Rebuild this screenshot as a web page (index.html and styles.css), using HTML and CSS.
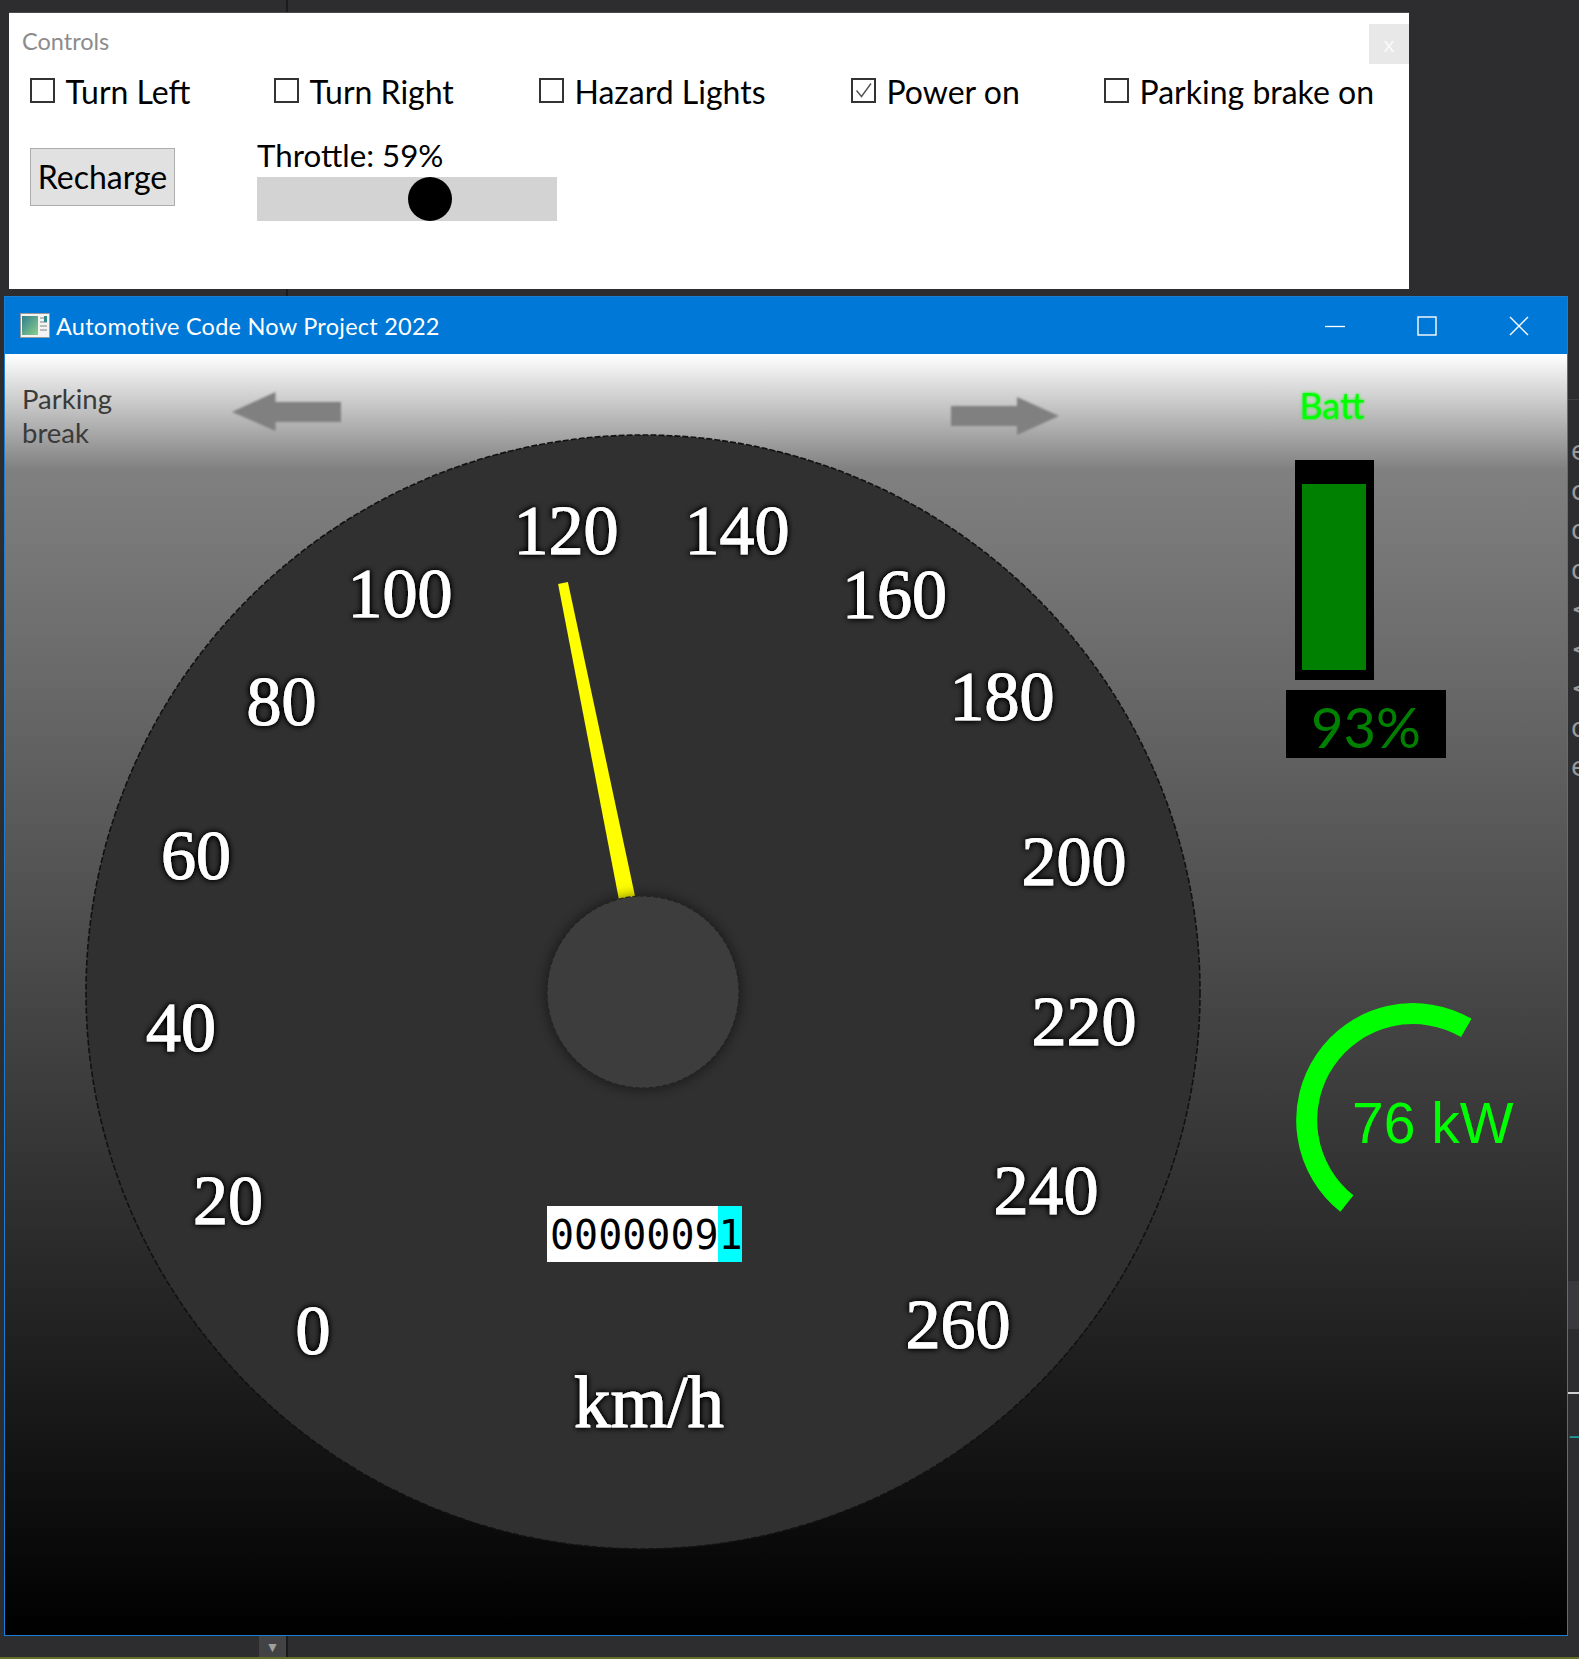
FILE: index.html
```html
<!DOCTYPE html>
<html>
<head>
<meta charset="utf-8">
<link rel="stylesheet" href="styles.css">
</head>
<body>
<div class="screen">
  <div class="controls">
    <div class="ctl-head">
      <span class="ctl-title">Controls</span>
      <span class="ctl-close">x</span>
    </div>
    <div class="checks">
      <div class="chk"><span class="box"></span><span class="lbl">Turn Left</span></div>
      <div class="chk"><span class="box"></span><span class="lbl">Turn Right</span></div>
      <div class="chk"><span class="box"></span><span class="lbl">Hazard Lights</span></div>
      <div class="chk"><span class="box"><svg class="tick" viewBox="0 0 21 21" width="21" height="21"><polyline points="3.5,10.5 8.5,16.5 18,3.5" fill="none" stroke="#555" stroke-width="1.4"/></svg></span><span class="lbl">Power on</span></div>
      <div class="chk"><span class="box"></span><span class="lbl">Parking brake on</span></div>
    </div>
    <div class="row2">
      <div class="recharge">Recharge</div>
      <div class="throttle">
        <div class="thr-label">Throttle: 59%</div>
        <div class="track"><span class="knob" style="margin-left:151px"></span></div>
      </div>
    </div>
  </div>

  <div class="lower">
    <div class="window">
      <div class="titlebar">
        <svg class="appicon" width="30" height="25" viewBox="0 0 30 25">
          <defs>
            <linearGradient id="ig" x1="0" y1="0" x2="1" y2="1">
              <stop offset="0" stop-color="#2f7f8f"/>
              <stop offset="1" stop-color="#8ccf8a"/>
            </linearGradient>
          </defs>
          <rect x="0.5" y="0.5" width="29" height="24" fill="#f4f4f4" stroke="#9a9a9a"/>
          <rect x="2" y="3" width="16" height="19" fill="url(#ig)"/>
          <rect x="20" y="4" width="7" height="2" fill="#bbb"/>
          <rect x="20" y="8" width="7" height="2" fill="#bbb"/>
          <rect x="20" y="12" width="7" height="2" fill="#bbb"/>
          <rect x="20" y="16" width="7" height="2" fill="#bbb"/>
          <rect x="24" y="3" width="3" height="6" fill="#2c8c8c"/>
        </svg>
        <span class="title">Automotive Code Now Project 2022</span>
        <div class="wbtns">
          <span class="wbtn"><svg width="20" height="20" viewBox="0 0 20 20"><line x1="0" y1="10.5" x2="20" y2="10.5" stroke="#fff" stroke-width="1.3"/></svg></span>
          <span class="wbtn"><svg width="20" height="20" viewBox="0 0 20 20"><rect x="1" y="1" width="18" height="18" fill="none" stroke="#fff" stroke-width="1.4"/></svg></span>
          <span class="wbtn"><svg width="20" height="20" viewBox="0 0 20 20"><path d="M1 1 L19 19 M19 1 L1 19" stroke="#fff" stroke-width="1.4"/></svg></span>
        </div>
      </div>
      <div class="client">
        <svg class="canvas" width="1562" height="1281" viewBox="5 354 1562 1281">
          <defs>
            <filter id="numglow" x="-30%" y="-30%" width="160%" height="160%">
              <feGaussianBlur in="SourceAlpha" stdDeviation="3"/>
              <feComponentTransfer><feFuncA type="linear" slope="1.8"/></feComponentTransfer>
              <feMerge><feMergeNode/><feMergeNode in="SourceGraphic"/></feMerge>
            </filter>
            <filter id="hubshadow" x="-30%" y="-30%" width="160%" height="160%">
              <feDropShadow dx="0" dy="0" stdDeviation="7" flood-color="#000" flood-opacity="0.55"/>
            </filter>
            <filter id="soft" x="-10%" y="-20%" width="120%" height="140%">
              <feGaussianBlur stdDeviation="0.9"/>
            </filter>
            <filter id="gglow" x="-20%" y="-30%" width="140%" height="160%">
              <feGaussianBlur in="SourceGraphic" stdDeviation="1.6" result="b"/>
              <feMerge><feMergeNode in="b"/><feMergeNode in="SourceGraphic"/></feMerge>
            </filter>
          </defs>

          <text class="pb" x="22" y="409">Parking</text>
          <text class="pb" x="22" y="443">break</text>

          <polygon class="arrow" filter="url(#soft)" points="232,412 275.5,392 275.5,402 341,402 341,422 275.5,422 275.5,431"/>
          <polygon class="arrow" filter="url(#soft)" points="1059,416 1017,397 1017,406 951,406 951,426 1017,426 1017,435"/>

          <text class="batt" filter="url(#gglow)" x="1332" y="419" text-anchor="middle">Batt</text>
          <rect x="1295" y="460" width="79" height="220" fill="#000"/>
          <rect x="1302" y="484" width="64" height="186" fill="#008000"/>
          <rect x="1286" y="690" width="160" height="68" fill="#000"/>
          <text class="pct" x="1366" y="748" text-anchor="middle">93%</text>

          <circle cx="643" cy="992" r="557" fill="#303030" stroke="#111" stroke-width="1.6" stroke-dasharray="6 2"/>

          <g class="nums" filter="url(#numglow)">
            <text x="313" y="1354">0</text>
            <text x="228" y="1223.5">20</text>
            <text x="181" y="1051">40</text>
            <text x="196" y="878.5">60</text>
            <text x="281.5" y="725">80</text>
            <text x="400" y="617">100</text>
            <text x="566" y="553.5">120</text>
            <text x="737" y="553.5">140</text>
            <text x="894.5" y="617.5">160</text>
            <text x="1002" y="720">180</text>
            <text x="1074" y="885">200</text>
            <text x="1084" y="1044.5">220</text>
            <text x="1046" y="1214">240</text>
            <text x="958" y="1347.5">260</text>
            <text class="unit" x="649" y="1427">km/h</text>
          </g>

          <polygon class="needle" points="567.9,582 558.1,584 623.7,924.2 640.3,920.8"/>
          <circle cx="643" cy="992" r="96" fill="#3d3d3d" stroke="#222" stroke-width="1.2" stroke-dasharray="5 2" filter="url(#hubshadow)"/>

          <rect x="547" y="1206" width="172" height="56" fill="#fff"/>
          <rect x="718" y="1206" width="24" height="56" fill="#00ffff"/>
          <text class="odo" x="550" y="1249">00000091</text>

          <path d="M 1346.9 1203.5 A 106.5 106.5 0 0 1 1466.25 1027.8" fill="none" stroke="#00ff00" stroke-width="21"/>
          <text class="kw" x="1352" y="1143">76 kW</text>
        </svg>
      </div>
    </div>
    <div class="side">
      <div class="side-rule"></div>
      <div class="code">ee
ce
oo
o
&lt;
&lt;
&lt;
oo
e</div>
      <div class="side-band"></div>
      <div class="side-line"></div>
      <div class="side-teal">_(</div>
    </div>
  </div>

  <div class="taskbar">
    <span class="scrollbtn">&#9660;</span>
  </div>
</div>
</body>
</html>
```

FILE: styles.css
```css
html, body {
  margin: 0;
  padding: 0;
}
body {
  background: #2d2d30;
  font-family: Lato, "Open Sans", sans-serif;
}
.screen {
  width: 1579px;
  height: 1659px;
  overflow: hidden;
  display: flex;
  flex-direction: column;
  background:
    linear-gradient(to right, transparent 286px, #1b1b1c 286px, #1b1b1c 288px, transparent 288px),
    #2d2d30;
}

/* ---------- Controls panel ---------- */
.controls {
  margin: 13px 0 0 9px;
  width: 1400px;
  height: 276px;
  flex: none;
  box-sizing: border-box;
  padding-left: 21px;
  background: #fff;
  box-shadow: 0 -1px 0 #4a4a4e;
  color: #000;
}
.ctl-head {
  display: flex;
  justify-content: space-between;
  align-items: flex-start;
  height: 51px;
  margin-left: -8px;
}
.ctl-title {
  margin-top: 12.5px;
  font-size: 23.5px;
  line-height: 30px;
  color: #8c8c8c;
}
.ctl-close {
  margin-top: 11px;
  width: 40px;
  height: 40px;
  background: #e8e8e8;
  color: #fafafa;
  font-size: 22px;
  line-height: 40px;
  text-align: center;
}
.checks {
  display: grid;
  grid-template-columns: 244px 265px 312px 253px auto;
  align-items: center;
  margin-top: 7px;
  height: 38px;
  font-size: 32px;
}
.chk {
  display: flex;
  align-items: center;
  gap: 10.5px;
  line-height: 38px;
}
.lbl {
  position: relative;
  top: 1.5px;
}
.box {
  width: 25px;
  height: 25px;
  box-sizing: border-box;
  border: 2px solid #333;
  flex: none;
  display: flex;
}
.tick {
  display: block;
}
.row2 {
  display: flex;
  align-items: flex-start;
  margin-top: 26.5px;
}
.recharge {
  margin-top: 12.5px;
  width: 145px;
  height: 58px;
  box-sizing: border-box;
  background: #e1e1e1;
  border: 1px solid #adadad;
  font-size: 32px;
  line-height: 56px;
  text-align: center;
}
.throttle {
  margin-left: 82px;
}
.thr-label {
  font-size: 31.3px;
  line-height: 38px;
}
.track {
  margin-top: 3.5px;
  width: 300px;
  height: 44px;
  background: #d3d3d3;
  display: flex;
}
.knob {
  width: 44px;
  height: 44px;
  border-radius: 50%;
  background: #000;
  flex: none;
}

/* ---------- Window ---------- */
.lower {
  display: flex;
  margin-top: 7px;
  height: 1340px;
  flex: none;
}
.window {
  margin-left: 4px;
  width: 1564px;
  flex: none;
  box-sizing: border-box;
  border: 1px solid #1a7fd4;
  display: flex;
  flex-direction: column;
}
.titlebar {
  height: 57px;
  flex: none;
  background: #0078d7;
  display: flex;
  align-items: center;
  color: #fff;
}
.appicon {
  margin-left: 14.5px;
  display: block;
}
.title {
  margin-left: 6.5px;
  font-size: 23.5px;
  letter-spacing: 0.25px;
}
.wbtns {
  margin-left: auto;
  margin-right: 2px;
  display: flex;
}
.wbtn {
  width: 92px;
  height: 57px;
  display: flex;
  align-items: center;
  justify-content: center;
}
.wbtn svg {
  display: block;
}
.client {
  flex: 1;
  background: linear-gradient(#ffffff 0%, #808080 9%, #000000 100%);
  overflow: hidden;
}
.canvas {
  display: block;
}
.pb {
  font-family: Lato, sans-serif;
  font-size: 27.5px;
  fill: #3a3a3a;
}
.arrow {
  fill: #808080;
}
.batt {
  font-family: Lato, sans-serif;
  font-size: 36px;
  fill: #00ff00;
}
.pct {
  font-family: Lato, sans-serif;
  font-size: 56px;
  fill: #008000;
}
.nums text {
  font-family: "Liberation Serif", serif;
  font-size: 70px;
  fill: #fff;
  stroke: #fff;
  stroke-width: 1px;
  text-anchor: middle;
}
.nums .unit {
  font-size: 73px;
}
.needle {
  fill: #ffff00;
}
.odo {
  font-family: "DejaVu Sans Mono", monospace;
  font-size: 40px;
  fill: #000;
}
.kw {
  font-family: "Liberation Sans", Arial, sans-serif;
  font-size: 57px;
  fill: #00ff00;
}

/* ---------- Side strip (window behind) ---------- */
.side {
  flex: 1;
  overflow: hidden;
  padding-top: 103px;
}
.side-rule {
  border-top: 1px solid #3f3f46;
}
.code {
  padding: 32px 0 0 3px;
  font-family: "DejaVu Sans", sans-serif;
  font-size: 26px;
  line-height: 39.5px;
  color: #9a9a9a;
  white-space: pre;
}
.side-band {
  margin-top: 493px;
  height: 48px;
  background: #3a3a3e;
}
.side-line {
  margin-top: 63px;
  border-top: 2px solid #d0d0d0;
}
.side-teal {
  margin-top: 14px;
  font-family: "DejaVu Sans", sans-serif;
  font-size: 26px;
  color: #1e9b9b;
  padding-left: 2px;
}

/* ---------- Bottom strip ---------- */
.taskbar {
  flex: 1;
  box-sizing: border-box;
  border-bottom: 2px solid #627028;
  display: flex;
}
.scrollbtn {
  margin-left: 259px;
  width: 27px;
  height: 21px;
  background: #434346;
  color: #a0a0a0;
  font-size: 14px;
  line-height: 21px;
  text-align: center;
}
```
